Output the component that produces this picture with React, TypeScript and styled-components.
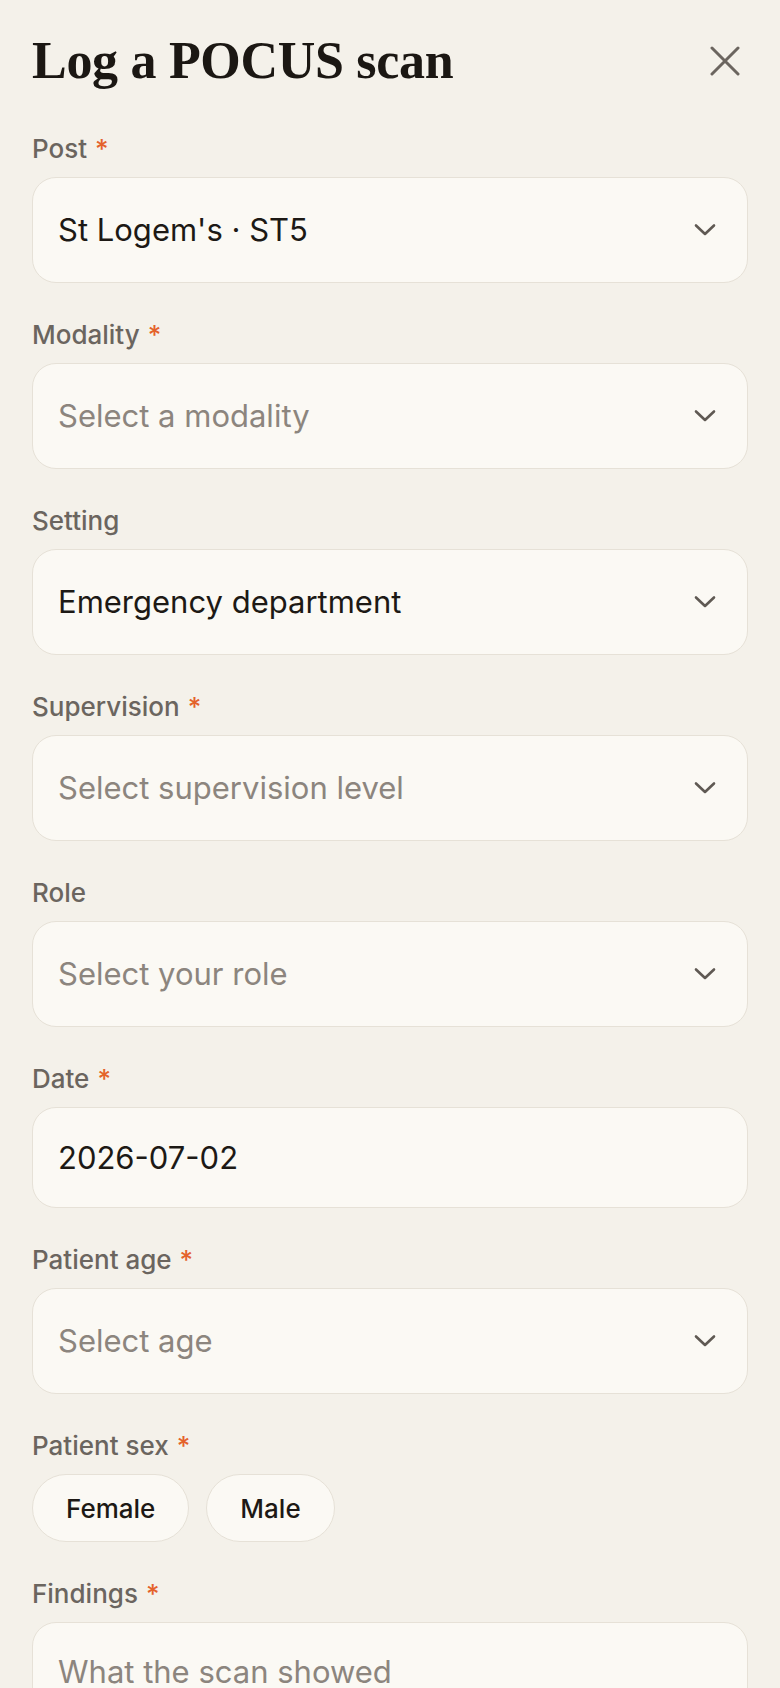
import React from "react";
import styled, { createGlobalStyle } from "styled-components";

const GlobalStyle = createGlobalStyle`
  html, body {
    margin: 0;
    padding: 0;
    background: #f4f1ea;
  }
  body {
    font-family: Inter, "Noto Sans", sans-serif;
    color: #1d1915;
  }
  * {
    box-sizing: border-box;
  }
`;

type Field = {
  label: string;
  required?: boolean;
  kind: "select" | "date" | "pills" | "textarea";
  value?: string;
  placeholder?: string;
  options?: string[];
};

const fields: Field[] = [
  { label: "Post", required: true, kind: "select", value: "St Logem's · ST5" },
  { label: "Modality", required: true, kind: "select", placeholder: "Select a modality" },
  { label: "Setting", kind: "select", value: "Emergency department" },
  { label: "Supervision", required: true, kind: "select", placeholder: "Select supervision level" },
  { label: "Role", kind: "select", placeholder: "Select your role" },
  { label: "Date", required: true, kind: "date", value: "2026-07-02" },
  { label: "Patient age", required: true, kind: "select", placeholder: "Select age" },
  { label: "Patient sex", required: true, kind: "pills", options: ["Female", "Male"] },
  { label: "Findings", required: true, kind: "textarea", placeholder: "What the scan showed" },
];

export default function App() {
  return (
    <>
      <GlobalStyle />
      <Sheet>
        <Header>
          <Title>Log a POCUS scan</Title>
          <CloseButton aria-label="Close">
            <svg width="30" height="30" viewBox="0 0 30 30" fill="none">
              <path
                d="M2 2L28 28M28 2L2 28"
                stroke="#6b655f"
                strokeWidth="3"
                strokeLinecap="round"
              />
            </svg>
          </CloseButton>
        </Header>
        <Form>
          {fields.map((f) => (
            <FieldGroup key={f.label}>
              <Label>
                {f.label}
                {f.required && <Required>*</Required>}
              </Label>
              {f.kind === "select" && (
                <Control tall>
                  <ControlText placeholder={!f.value}>
                    {f.value ?? f.placeholder}
                  </ControlText>
                  <Chevron />
                </Control>
              )}
              {f.kind === "date" && (
                <Control>
                  <ControlText>{f.value}</ControlText>
                </Control>
              )}
              {f.kind === "pills" && (
                <PillRow>
                  {f.options!.map((o) => (
                    <Pill key={o}>{o}</Pill>
                  ))}
                </PillRow>
              )}
              {f.kind === "textarea" && (
                <TextArea>
                  <ControlText placeholder>{f.placeholder}</ControlText>
                </TextArea>
              )}
            </FieldGroup>
          ))}
        </Form>
      </Sheet>
    </>
  );
}

const Chevron = () => (
  <svg width="24" height="14" viewBox="0 0 24 14" fill="none">
    <path
      d="M3 2.5L12 11L21 2.5"
      stroke="#5f5953"
      strokeWidth="2.6"
      strokeLinecap="round"
      strokeLinejoin="round"
    />
  </svg>
);

const Sheet = styled.div`
  padding: 32px 32px 60px 32px;
  min-height: 100vh;
`;

const Header = styled.div`
  display: flex;
  align-items: center;
  justify-content: space-between;
  height: 58px;
`;

const Title = styled.h1`
  margin: 0;
  font-family: "Liberation Serif", "DejaVu Serif", serif;
  font-weight: 700;
  font-size: 52px;
  line-height: 58px;
  letter-spacing: -0.3px;
  color: #1b1713;
`;

const CloseButton = styled.button`
  display: flex;
  align-items: center;
  justify-content: center;
  background: none;
  border: none;
  padding: 0;
  margin-right: 8px;
  cursor: pointer;
`;

const Form = styled.div`
  display: flex;
  flex-direction: column;
  gap: 36px;
  margin-top: 43px;
`;

const FieldGroup = styled.div`
  display: flex;
  flex-direction: column;
  gap: 12px;
`;

const Label = styled.div`
  font-size: 26px;
  line-height: 32px;
  font-weight: 500;
  color: #6b655f;
`;

const Required = styled.span`
  color: #e4622b;
  margin-left: 8px;
`;

const Control = styled.div<{ tall?: boolean }>`
  display: flex;
  align-items: center;
  justify-content: space-between;
  height: ${({ tall }) => (tall ? "106px" : "101px")};
  padding: 0 30px 0 25px;
  background: #fbf9f4;
  border: 1.5px solid #e6e1d7;
  border-radius: 24px;
`;

const ControlText = styled.span<{ placeholder?: boolean }>`
  font-size: 31px;
  line-height: 40px;
  color: ${({ placeholder }) => (placeholder ? "#8c857e" : "#1d1915")};
`;

const TextArea = styled.div`
  height: 200px;
  padding: 29px 25px;
  background: #fbf9f4;
  border: 1.5px solid #e6e1d7;
  border-radius: 24px;
`;

const PillRow = styled.div`
  display: flex;
  gap: 17px;
`;

const Pill = styled.button`
  height: 68px;
  padding: 0 33px;
  border-radius: 34px;
  background: #fbf9f4;
  border: 1.5px solid #e6e1d7;
  font-family: Inter, "Noto Sans", sans-serif;
  font-size: 26px;
  font-weight: 500;
  color: #1d1915;
  cursor: pointer;
`;
